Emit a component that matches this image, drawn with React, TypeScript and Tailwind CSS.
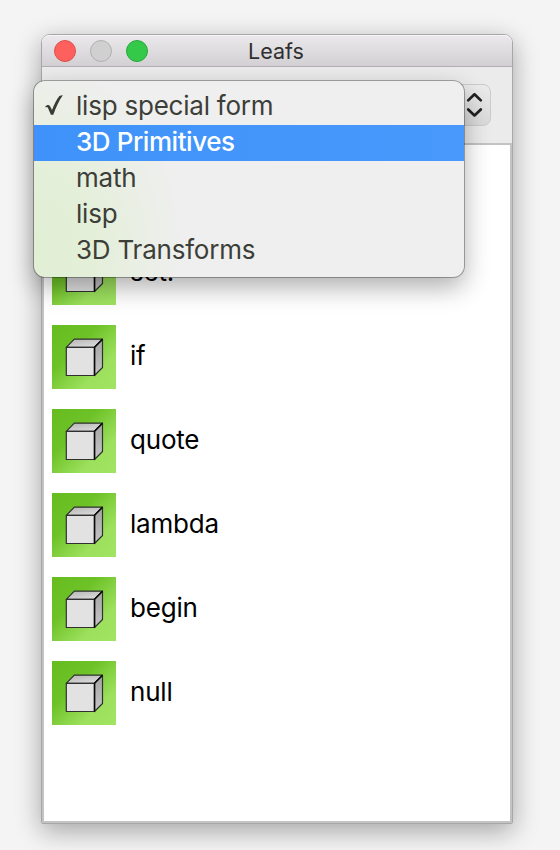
import React from "react";

const leafs = ["set!", "if", "quote", "lambda", "begin", "null"];

const categories = ["lisp special form", "3D Primitives", "math", "lisp", "3D Transforms"];

function Cube({ id }: { id: string }) {
  return (
    <svg width="64" height="64" viewBox="0 0 64 64" className="shrink-0">
      <defs>
        <linearGradient id={`bg-${id}`} x1="0" y1="0" x2="1" y2="1">
          <stop offset="0" stopColor="#66bc1f" />
          <stop offset="0.36" stopColor="#6dc227" />
          <stop offset="0.72" stopColor="#9ce05d" />
          <stop offset="1" stopColor="#a0e463" />
        </linearGradient>
        <linearGradient id={`top-${id}`} x1="0" y1="0" x2="0.6" y2="1">
          <stop offset="0" stopColor="#b5b5b5" />
          <stop offset="1" stopColor="#dadada" />
        </linearGradient>
        <linearGradient id={`side-${id}`} x1="0" y1="0" x2="0" y2="1">
          <stop offset="0" stopColor="#a5a5a5" />
          <stop offset="1" stopColor="#c6c6c6" />
        </linearGradient>
      </defs>
      <rect width="64" height="64" fill={`url(#bg-${id})`} />
      <g stroke="#303030" strokeWidth="1.2" strokeLinejoin="round">
        <path d="M14.3 22.3 22.3 14.2H50.5L42.5 22.3Z" fill={`url(#top-${id})`} />
        <path d="M42.5 22.3 50.5 14.2V42.5L42.5 50.5Z" fill={`url(#side-${id})`} />
        <path d="M14.3 22.3H42.5V50.5H14.3Z" fill="#e2e2e2" />
        <path d="M42.5 50.5V22.3L50.5 14.2" fill="none" stroke="#080808" strokeWidth="1.5" />
      </g>
    </svg>
  );
}

export default function App() {
  return (
    <div className="relative h-[850px] w-[560px] overflow-hidden bg-[#f4f4f4] pl-[41px] pt-[34px] font-[Inter,sans-serif]">
      <div className="flex h-[790px] w-[472px] flex-col rounded-t-[9px] rounded-b-[2px] border border-[#a7a7a7] bg-[#ebebeb] shadow-[0_7px_26px_rgba(0,0,0,0.33)]">
        <div className="relative flex h-8 shrink-0 items-center rounded-t-[8px] border-b border-[#b1afb1] bg-linear-to-b from-[#ebe9eb] to-[#d2d0d2] pl-3 shadow-[inset_0_1px_0_#f7f6f7]">
          <div className="flex gap-[14px]">
            <div className="size-[22px] rounded-full border border-[#e04e4b] bg-[#fd605d]" />
            <div className="size-[22px] rounded-full border border-[#b2b1b2] bg-[#d1d0d1]" />
            <div className="size-[22px] rounded-full border border-[#27a83a] bg-[#35c94a]" />
          </div>
          <div className="absolute inset-x-0 top-px text-center text-[21.5px] leading-[30px] text-[#302f30]">
            <span className="relative left-[-1px]">Leafs</span>
          </div>
        </div>
        <div className="flex h-[76px] shrink-0 justify-end pr-[21px] pt-[17px]">
          <div className="flex h-[42px] w-[180px] items-center justify-end rounded-[8px] border border-[#cbcbcb] bg-linear-to-b from-[#ebebeb] to-[#dadada] pr-[6px]">
            <svg width="18" height="26" viewBox="0 0 18 26" fill="none" stroke="#202020" strokeWidth="2.7" strokeLinecap="round" strokeLinejoin="round">
              <path d="M2.2 8.4 8.5 2.3 14.8 8.4M2.2 17.4 8.5 23.4 14.8 17.4" />
            </svg>
          </div>
        </div>
        <div className="flex grow flex-col gap-5 border-2 border-[#c3c3c3] bg-white pl-2 pt-24">
          {leafs.map((leaf, i) => (
            <div key={leaf} className="flex h-16 items-center gap-[14px]">
              <Cube id={String(i)} />
              <span className="relative top-[-1px] text-[26px] leading-8 tracking-[-0.2px] text-black">{leaf}</span>
            </div>
          ))}
        </div>
      </div>

      <div className="absolute left-[34px] top-[81px] h-[196px] w-[430px] rounded-[11px] bg-[#efefef] bg-[radial-gradient(ellipse_150px_190px_at_0%_85%,#e0efd4_0%,#e4efd9_40%,#efefef_100%)] py-2 shadow-[0_0_0_1px_rgba(0,0,0,0.3),0_10px_26px_rgba(0,0,0,0.32)]">
        {categories.map((label, i) => (
          <div
            key={label}
            className={`flex h-9 items-center pl-[11px] text-[26px] ${
              i === 1
                ? "bg-linear-to-r from-[#3e92f9] to-[#4999fc] font-medium tracking-[-0.45px] text-white"
                : "tracking-[-0.22px] text-[#3c3e38]"
            }`}
          >
            <div className="w-[31px] shrink-0">
              {i === 0 && (
                <svg width="20" height="22" viewBox="0 0 20 22" fill="#393b34" className="relative top-[-1px]">
                  <path d="M.4 11.6C2 9.5 4.2 9.6 5.2 11.6L7 15C9.4 9 11.6 4.4 14.4 1.1C15.4.4 16.6.3 17.8.3C14 5.8 11 12 8.3 19.8H5.9L3.1 13.2C2.5 11.9 1.8 11.8.6 12.6Z" />
                </svg>
              )}
            </div>
            <span className="relative top-[-2px]">{label}</span>
          </div>
        ))}
      </div>
    </div>
  );
}
